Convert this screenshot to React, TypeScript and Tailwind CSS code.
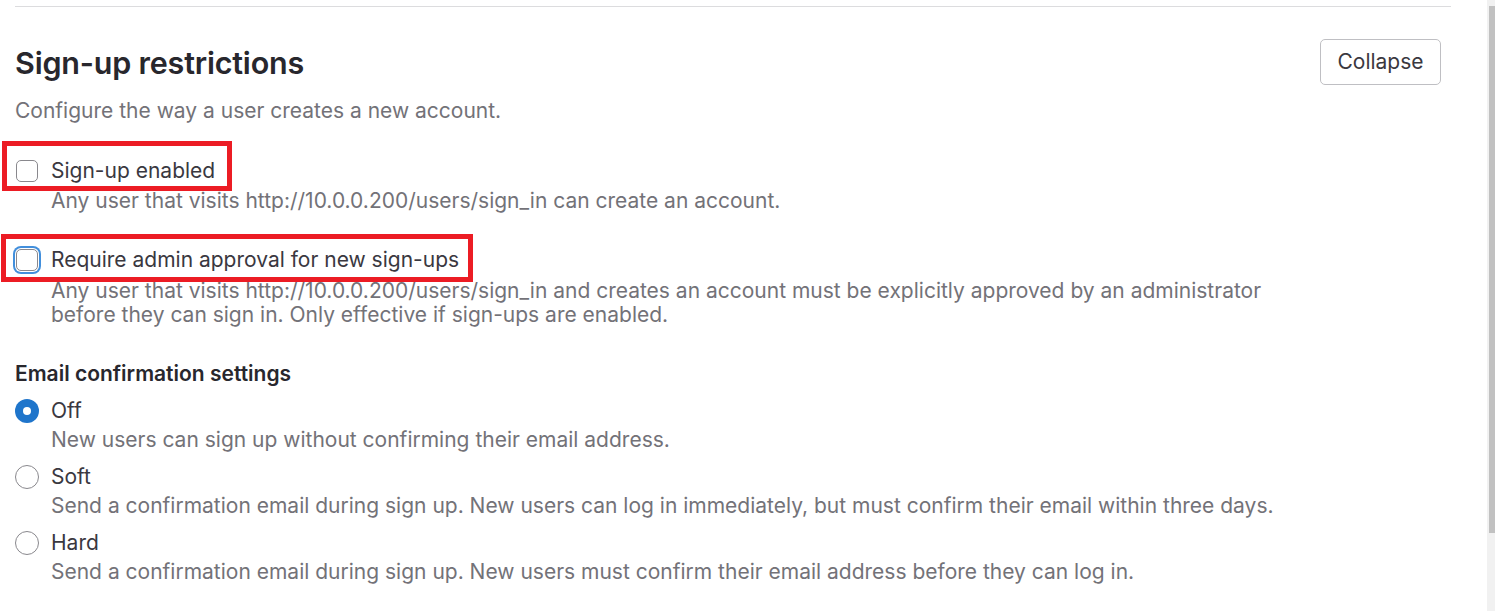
import React from 'react';

const font = { fontFamily: 'Inter, "Noto Sans", sans-serif' };

function Checkbox({ focused }: { focused?: boolean }) {
  return (
    <span
      className={`ml-[1px] flex h-[22px] w-[22px] shrink-0 items-center justify-center rounded-[5px] border border-[#89888d] bg-white ${
        focused ? 'ring-2 ring-[#428fdc] ring-offset-1' : ''
      }`}
    />
  );
}

function Radio({ checked }: { checked?: boolean }) {
  return checked ? (
    <span className="flex h-[24px] w-[24px] shrink-0 items-center justify-center rounded-full bg-[#1f75cb]">
      <span className="h-[8px] w-[8px] rounded-full bg-white" />
    </span>
  ) : (
    <span className="h-[24px] w-[24px] shrink-0 rounded-full border border-[#89888d] bg-white" />
  );
}

// red annotation frame drawn over a row
function Marked({ children, className }: { children: React.ReactNode; className: string }) {
  return (
    <div className="relative">
      <div className={`pointer-events-none absolute border-[5px] border-[#ec1c24] ${className}`} />
      {children}
    </div>
  );
}

const radios = [
  { label: 'Off', help: 'New users can sign up without confirming their email address.', checked: true },
  {
    label: 'Soft',
    help: 'Send a confirmation email during sign up. New users can log in immediately, but must confirm their email within three days.',
  },
  {
    label: 'Hard',
    help: 'Send a confirmation email during sign up. New users must confirm their email address before they can log in.',
  },
];

export default function App() {
  return (
    <div className="flex h-[611px] w-[1495px] overflow-hidden bg-white text-[#3a383f]" style={font}>
      <div className="w-[1487px] shrink-0">
        <section className="ml-[15px] mt-[6px] w-[1436px] border-t border-[#dcdcde]">
          <div className="flex items-center justify-between pr-[10px] pt-[31px]">
            <h2 className="mt-[2px] text-[30.5px] font-semibold leading-[46px] tracking-[-0.2px] text-[#28272d]">
              Sign-up restrictions
            </h2>
            <button
              type="button"
              className="h-[46px] w-[121px] rounded-[5px] border border-[#bfbfc3] bg-white text-[21px] text-[#3a383f]"
            >
              Collapse
            </button>
          </div>
          <p className="mt-[13px] text-[21px] leading-[24px] text-[#737278]">
            Configure the way a user creates a new account.
          </p>

          <div className="mt-[36px]">
            <Marked className="left-[-13px] top-[-18px] h-[50px] w-[230px]">
              <label className="flex items-center gap-[13px] text-[21px] leading-[24px]">
                <Checkbox />
                <span>Sign-up enabled</span>
              </label>
            </Marked>
            <p className="mt-[6px] pl-[36px] text-[21px] leading-[24px] text-[#737278]">
              Any user that visits http://10.0.0.200/users/sign_in can create an account.
            </p>
          </div>

          <div className="mt-[35px]">
            <Marked className="left-[-14px] top-[-14px] h-[48px] w-[472px]">
              <label className="flex items-center gap-[13px] text-[21px] leading-[24px]">
                <Checkbox focused />
                <span>Require admin approval for new sign-ups</span>
              </label>
            </Marked>
            <p className="mt-[7px] w-[1275px] pl-[36px] text-[21px] leading-[24px] text-[#737278]">
              Any user that visits http://10.0.0.200/users/sign_in and creates an account must be explicitly approved by
              an administrator before they can sign in. Only effective if sign-ups are enabled.
            </p>
          </div>

          <h3 className="mt-[35px] text-[21px] font-semibold leading-[24px] text-[#28272d]">
            Email confirmation settings
          </h3>
          <div className="mt-[13px] flex flex-col gap-[13px]">
            {radios.map((r) => (
              <div key={r.label}>
                <label className="flex items-center gap-[12px] text-[21px] leading-[24px]">
                  <Radio checked={r.checked} />
                  <span>{r.label}</span>
                </label>
                <p className="mt-[5px] pl-[36px] text-[21px] leading-[24px] text-[#737278]">{r.help}</p>
              </div>
            ))}
          </div>
        </section>
      </div>
      <div className="flex h-full w-[8px] flex-col bg-[#f1f1f1] pt-[6px]">
        <div className="ml-[2px] h-[527px] w-[6px] bg-[#c1c1c1]" />
      </div>
    </div>
  );
}
